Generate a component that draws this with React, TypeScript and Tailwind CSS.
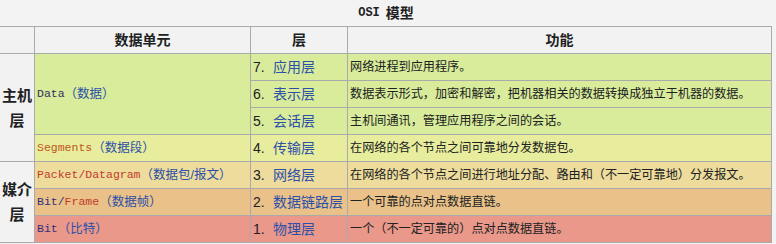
const cjk = "font-['Liberation_Sans','Noto_Sans_CJK_SC',sans-serif]";
const mono = "font-['Liberation_Mono','Noto_Sans_CJK_SC',monospace]";

const cell = "flex items-center border-r border-b border-[#aaaaaa]";

type Layer = {
  num: string;
  name: string;
  desc: string;
  bg: string;
};

const layers: Layer[] = [
  { num: "7.", name: "应用层", desc: "网络进程到应用程序。", bg: "bg-[#d8ec9b]" },
  {
    num: "6.",
    name: "表示层",
    desc: "数据表示形式，加密和解密，把机器相关的数据转换成独立于机器的数据。",
    bg: "bg-[#d8ec9b]",
  },
  { num: "5.", name: "会话层", desc: "主机间通讯，管理应用程序之间的会话。", bg: "bg-[#d8ec9b]" },
  { num: "4.", name: "传输层", desc: "在网络的各个节点之间可靠地分发数据包。", bg: "bg-[#e7ed9c]" },
  {
    num: "3.",
    name: "网络层",
    desc: "在网络的各个节点之间进行地址分配、路由和（不一定可靠地）分发报文。",
    bg: "bg-[#eddc9c]",
  },
  { num: "2.", name: "数据链路层", desc: "一个可靠的点对点数据直链。", bg: "bg-[#e9c189]" },
  { num: "1.", name: "物理层", desc: "一个（不一定可靠的）点对点数据直链。", bg: "bg-[#e9988a]" },
];

function LayerCells({ layer }: { layer: Layer }) {
  return (
    <>
      <div className={`${cell} ${layer.bg} pl-[2px] text-[14px] text-[#202122]`}>
        <span className="inline-block w-[20px]">{layer.num}</span>
        <span className="text-[#2c50a8]">{layer.name}</span>
      </div>
      <div className={`${cell} ${layer.bg} pl-[2px] text-[12.15px] text-[#202122] whitespace-nowrap`}>
        {layer.desc}
      </div>
    </>
  );
}

function Unit({ children, bg, span }: { children: React.ReactNode; bg: string; span?: string }) {
  return (
    <div className={`${cell} ${bg} ${span ?? ""} pl-[2px] whitespace-nowrap`}>
      {children}
    </div>
  );
}

const code = `${mono} text-[11.5px]`;
const zh = "text-[12.5px] text-[#2c50a8]";

export default function App() {
  return (
    <div className={`w-[776px] h-[244px] bg-[#f3f3f3] ${cjk} text-[#202122] overflow-hidden`}>
      <div className="w-[772px] h-[26px] flex items-center justify-center font-bold text-[14px]">
        <span className={`${mono} text-[12px]`}>OSI</span>
        <span className="ml-[6px]">模型</span>
      </div>
      <div className="w-[772px] grid grid-cols-[35px_216px_97px_424px] auto-rows-[27px] border-t border-[#aaaaaa]">
        <div className={`${cell} bg-[#f2f2f2]`} />
        <div className={`${cell} bg-[#f2f2f2] justify-center font-bold text-[14px]`}>数据单元</div>
        <div className={`${cell} bg-[#f2f2f2] justify-center font-bold text-[14px]`}>层</div>
        <div className={`${cell} bg-[#f2f2f2] justify-center font-bold text-[14px]`}>功能</div>

        <div className={`${cell} row-span-4 bg-[#f2f2f2] justify-center text-center font-bold text-[15px] leading-[25px]`}>
          主机层
        </div>
        <Unit bg="bg-[#d8ec9b]" span="row-span-3">
          <span className={`${code} text-[#30305e]`}>Data</span>
          <span className={zh}>（数据）</span>
        </Unit>
        <LayerCells layer={layers[0]} />
        <LayerCells layer={layers[1]} />
        <LayerCells layer={layers[2]} />

        <Unit bg="bg-[#e7ed9c]">
          <span className={`${code} text-[#c0561e]`}>Segments</span>
          <span className={zh}>（数据段）</span>
        </Unit>
        <LayerCells layer={layers[3]} />

        <div className={`${cell} row-span-3 bg-[#f2f2f2] justify-center text-center font-bold text-[15px] leading-[25px]`}>
          媒介层
        </div>
        <Unit bg="bg-[#eddc9c]">
          <span className={`${code} text-[#c23a2c]`}>Packet/Datagram</span>
          <span className={zh}>（数据包/报文）</span>
        </Unit>
        <LayerCells layer={layers[4]} />

        <Unit bg="bg-[#e9c189]">
          <span className={`${code} text-[#30307e]`}>Bit/</span>
          <span className={`${code} text-[#c23a2c]`}>Frame</span>
          <span className={zh}>（数据帧）</span>
        </Unit>
        <LayerCells layer={layers[5]} />

        <Unit bg="bg-[#e9988a]">
          <span className={`${code} text-[#30307e]`}>Bit</span>
          <span className={zh}>（比特）</span>
        </Unit>
        <LayerCells layer={layers[6]} />
      </div>
    </div>
  );
}
